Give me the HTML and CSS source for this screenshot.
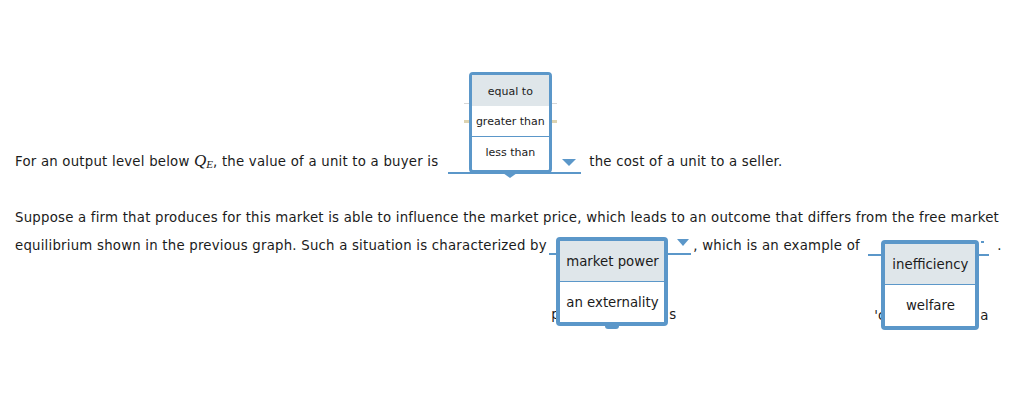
FILE: index.html
```html
<!DOCTYPE html>
<html lang="en">
  <head>
    <meta charset="UTF-8" />
    <title>Market Power Question</title>
    <link rel="stylesheet" href="styles.css">
  </head>
  <body>
    <div class="question">
      <p class="line1">
        For an output level below <i class="math">Q<sub>E</sub></i>, the value of a unit to a buyer is
        <span class="drop d1">
          <span class="stray grey"></span>
          <span class="stray tan left"></span>
          <span class="stray tan right"></span>
          <span class="caret"></span>
          <span class="menu small">
            <span class="opt active">equal to</span>
            <span class="opt">greater than</span>
            <span class="opt">less than</span>
            <span class="pointer"></span>
          </span>
        </span>
        the cost of a unit to a seller.
      </p>

      <p class="para">
        Suppose a firm that produces for this market is able to influence the market price, which leads to an outcome that differs from the free market
        equilibrium shown in the previous graph. Such a situation is characterized by
        <span class="drop d2">
          <span class="frag f-left">p</span>
          <span class="frag f-right">s</span>
          <span class="caret"></span>
          <span class="menu big">
            <span class="opt active">market power</span>
            <span class="opt">an externality</span>
            <span class="pointer"></span>
          </span>
        </span><span class="comma">, which is an example of</span>
        <span class="drop d3">
          <span class="frag f-left">'c</span>
          <span class="frag f-right">a</span>
          <span class="tick"></span>
          <span class="menu big centered">
            <span class="opt active">inefficiency</span>
            <span class="opt">welfare</span>
          </span>
        </span><span class="dot">.</span>
      </p>
    </div>
  </body>
</html>
```

FILE: styles.css
```css
html,
body {
  height: 100%;
}

body {
  margin: 0;
  background: #fff;
  color: #1b1b1b;
  font-family: "DejaVu Sans", Verdana, sans-serif;
  font-size: 13.3px;
  letter-spacing: 0.22px;
}

.question {
  padding: 151px 0 0 15px;
}

p {
  margin: 0;
}

.line1 {
  line-height: 20px;
  white-space: nowrap;
}

.para {
  margin-top: 30px;
  line-height: 28px;
  width: 1000px;
}

.math {
  font-family: "Liberation Serif", serif;
  font-size: 17px;
  letter-spacing: 0;
}

.math sub {
  font-size: 11px;
  vertical-align: -2px;
}

.drop {
  display: inline-block;
  position: relative;
  height: 0;
  border-bottom: 2px solid #5b97c9;
  letter-spacing: 0;
}

.d1 {
  width: 133px;
  margin: 0 4px 0 5px;
  vertical-align: -8px;
}

.d2 {
  width: 142px;
  margin-left: -2px;
  vertical-align: -5px;
}

.comma {
  margin-left: 2px;
}

.d3 {
  width: 121px;
  margin-left: 4px;
  vertical-align: -6px;
}

.dot {
  margin-left: 8px;
}

.caret {
  position: absolute;
  right: 5px;
  top: -13px;
  border-left: 7px solid transparent;
  border-right: 7px solid transparent;
  border-top: 7px solid #5b97c9;
}

.d2 .caret {
  right: 2px;
  top: -14px;
  border-left-width: 6px;
  border-right-width: 6px;
}

.tick {
  position: absolute;
  right: 5px;
  top: -13px;
  width: 3px;
  height: 2px;
  background: #5b97c9;
}

.menu {
  position: absolute;
  display: flex;
  flex-direction: column;
  background: #fff;
  border: 3px solid #5b97c9;
  border-radius: 4px;
  box-sizing: border-box;
  z-index: 2;
}

.opt {
  display: flex;
  align-items: center;
}

.opt.active {
  background: #dfe6ea;
}

.opt + .opt {
  border-top: 1px solid #5b97c9;
}

.small {
  left: 21px;
  top: -100px;
  width: 83px;
  height: 101px;
  font-size: 11px;
}

.small .opt {
  justify-content: center;
  height: 30px;
  padding-top: 2px;
  box-sizing: border-box;
}

.small .opt.active {
  height: 31px;
}

.small .opt.active + .opt {
  border-top: 0;
}

.big {
  border-width: 4px;
  font-size: 13.3px;
}

.big .opt {
  height: 40px;
  padding-left: 6px;
  padding-top: 2px;
  box-sizing: border-box;
}

.d2 .menu {
  left: 7px;
  top: -16px;
  width: 112px;
  height: 89px;
}

.d3 .menu {
  left: 13px;
  top: -14px;
  width: 98px;
  height: 90px;
}

.centered .opt {
  justify-content: center;
  padding-left: 0;
}

.pointer {
  position: absolute;
  left: 50%;
  bottom: -8px;
  margin-left: -7px;
  border-left: 7px solid transparent;
  border-right: 7px solid transparent;
  border-top: 5px solid #5b97c9;
}

.d2 .pointer {
  bottom: -7px;
  margin-left: -7px;
  width: 14px;
  border: 0;
  height: 3px;
  background: #5b97c9;
  border-radius: 0 0 3px 3px;
}

.stray {
  position: absolute;
  height: 1px;
}

.grey {
  left: 16px;
  top: -69px;
  width: 93px;
  background: #d6d6d6;
}

.tan {
  top: -52px;
  width: 5px;
  height: 3px;
  background: #ddd3b0;
}

.tan.left {
  left: 16px;
}

.tan.right {
  left: 104px;
}

.frag {
  position: absolute;
  top: 54px;
  line-height: 16px;
  font-size: 13.3px;
}

.d2 .f-left {
  left: 2px;
}

.d2 .f-right {
  left: 120px;
}

.d3 .f-left {
  left: 6px;
}

.d3 .f-right {
  left: 112px;
}
```
